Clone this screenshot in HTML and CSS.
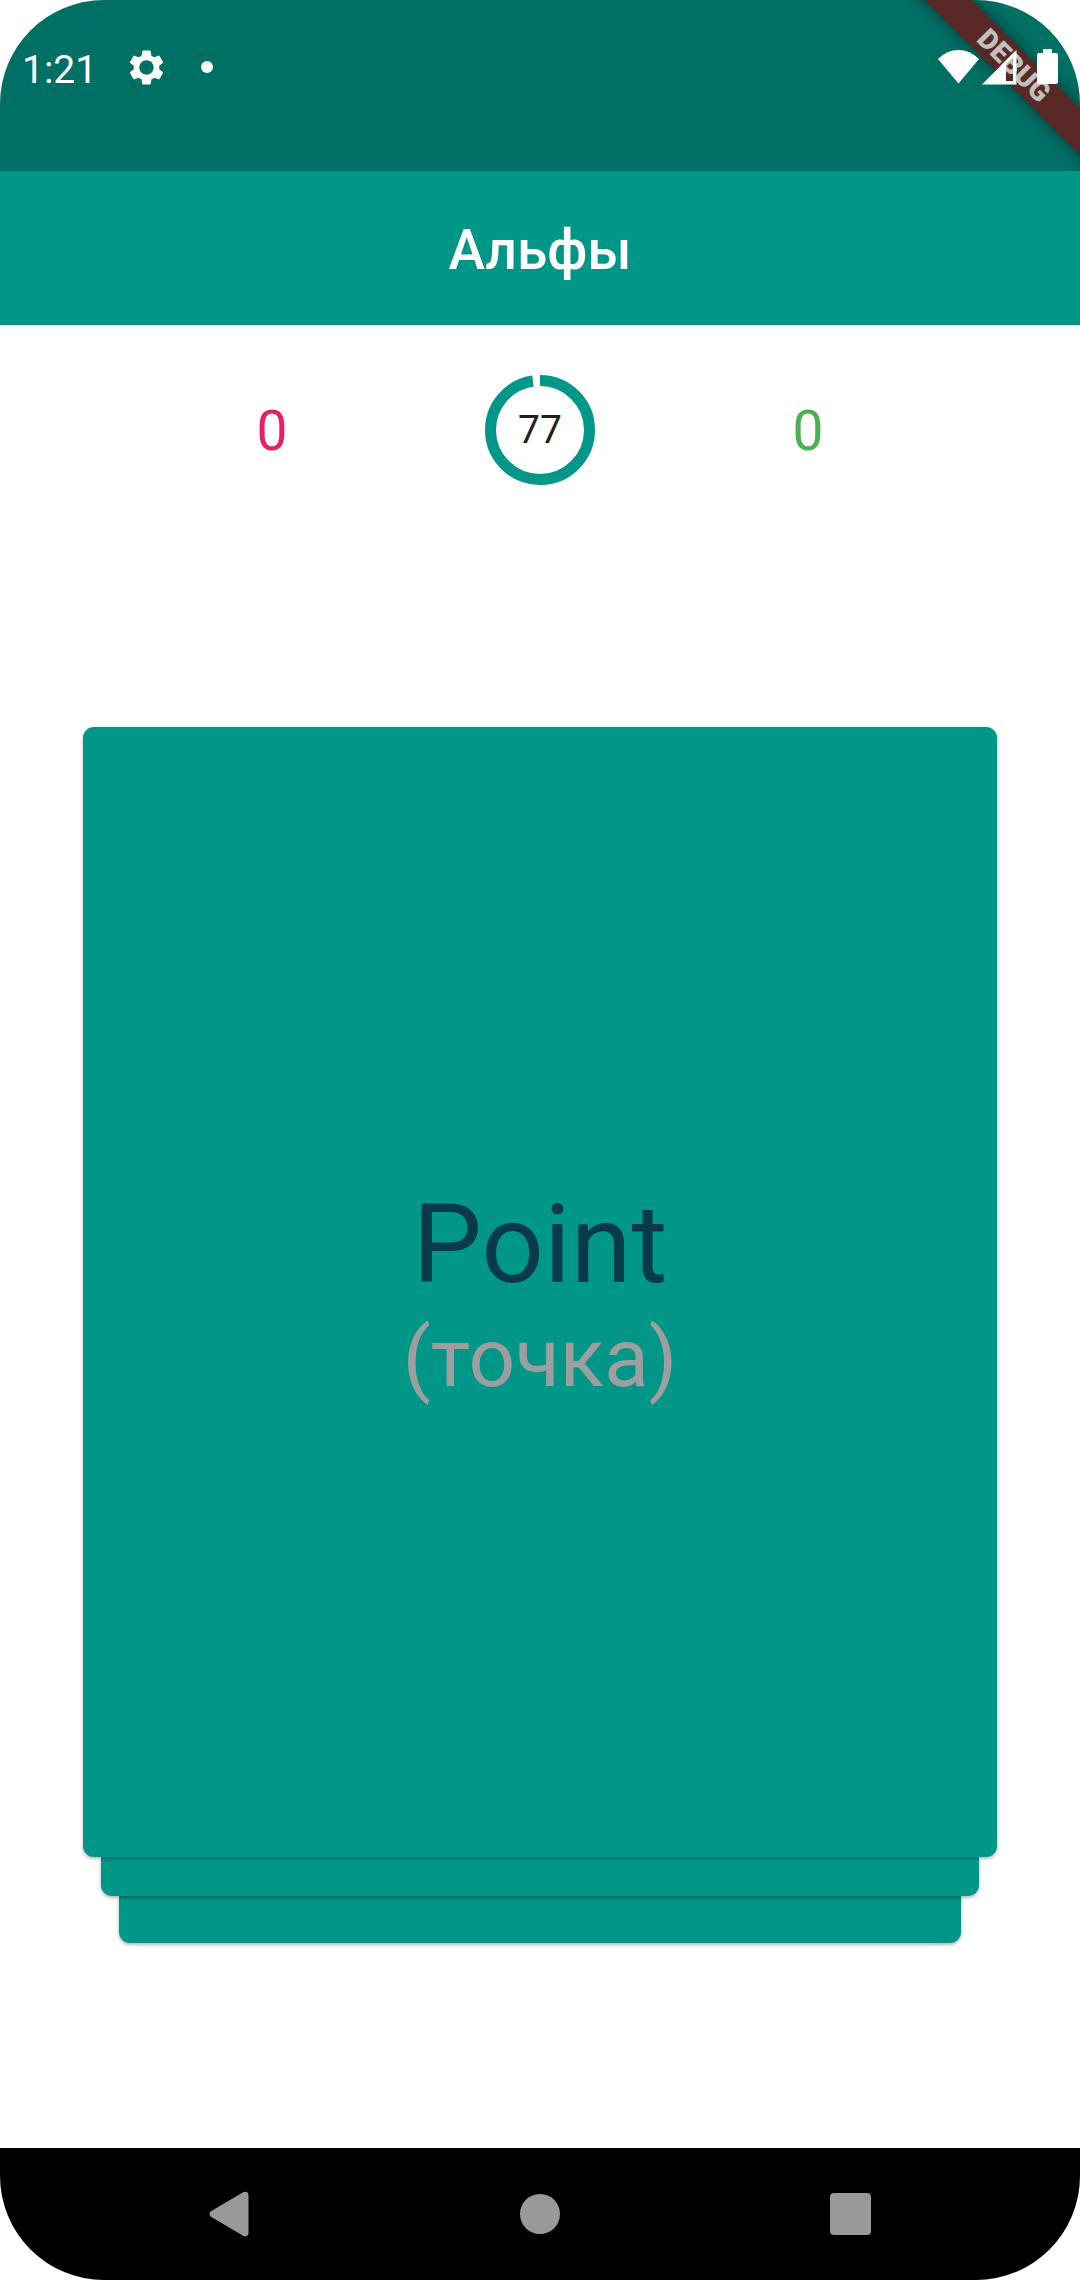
FILE: index.html
```html
<!DOCTYPE html>
<html lang="ru">
<head>
  <meta charset="utf-8">
  <meta name="viewport" content="width=device-width, initial-scale=1">
  <title>Альфы</title>
  <link rel="stylesheet" href="styles.css">
</head>
<body>
  <div class="screen">
    <div class="status-bar">
      <div class="ribbon">DEBUG</div>
      <div class="status-row">
        <span class="clock">1:21</span>
        <svg class="gear" viewBox="0 0 24 24" aria-hidden="true">
          <path d="M19.43 12.98c.04-.32.07-.64.07-.98s-.03-.66-.07-.98l2.11-1.65c.19-.15.24-.42.12-.64l-2-3.46c-.12-.22-.39-.3-.61-.22l-2.49 1c-.52-.4-1.08-.73-1.69-.98l-.38-2.65C14.46 2.18 14.25 2 14 2h-4c-.25 0-.46.18-.49.42l-.38 2.65c-.61.25-1.17.59-1.69.98l-2.49-1c-.23-.09-.49 0-.61.22l-2 3.46c-.13.22-.07.49.12.64l2.11 1.65c-.04.32-.07.65-.07.98s.03.66.07.98l-2.11 1.65c-.19.15-.24.42-.12.64l2 3.46c.12.22.39.3.61.22l2.49-1c.52.4 1.08.73 1.69.98l.38 2.65c.03.24.24.42.49.42h4c.25 0 .46-.18.49-.42l.38-2.65c.61-.25 1.17-.59 1.69-.98l2.49 1c.23.09.49 0 .61-.22l2-3.46c.12-.22.07-.49-.12-.64l-2.11-1.65zM12 16.200c-2.320 0-4.200-1.880-4.200-4.200s1.880-4.200 4.200-4.200 4.200 1.880 4.200 4.200-1.880 4.200-4.200 4.200z"/>
        </svg>
        <span class="dot"></span>
        <span class="signals">
          <svg width="41" height="36" viewBox="0 0 41 36" aria-hidden="true">
            <path d="M20.5 34.5 0 10Q9 1 20.5 1T41 10Z"/>
          </svg>
          <svg width="35" height="36" viewBox="0 0 35 36" aria-hidden="true">
            <path fill-rule="evenodd" d="M0 35.5 34.500 1V35.500ZM24 15.500V32H31V8.500Z"/>
          </svg>
          <svg class="battery" width="21" height="36" viewBox="0 0 21 36" aria-hidden="true">
            <path d="M6 0h9v4h4a2 2 0 0 1 2 2v27a2 2 0 0 1-2 2H2a2 2 0 0 1-2-2V6a2 2 0 0 1 2-2h4z"/>
          </svg>
        </span>
      </div>
    </div>

    <header class="app-bar">
      <h1 class="title">Альфы</h1>
    </header>

    <main class="game">
      <div class="scores">
        <span class="score wrong">0</span>
        <div class="timer">
          <svg class="ring" viewBox="0 0 110 110" aria-hidden="true">
            <circle cx="55" cy="55" r="49.5" pathLength="1000"/>
          </svg>
          <span class="seconds">77</span>
        </div>
        <span class="score right">0</span>
      </div>

      <div class="deck">
        <section class="card front">
          <p class="word">Point</p>
          <p class="translation">(точка)</p>
        </section>
        <div class="card second"></div>
        <div class="card third"></div>
      </div>
    </main>

    <nav class="nav-bar">
      <button class="nav-button" type="button" aria-label="Back">
        <svg width="40" height="46" viewBox="0 0 40 46" aria-hidden="true">
          <path d="M1.500 20.500 34.500 1Q39 -.5 39.500 4V42Q39 46 34.500 45L1.500 25.500Q-.5 23 1.500 20.500Z"/>
        </svg>
      </button>
      <button class="nav-button" type="button" aria-label="Home">
        <svg width="40" height="44" viewBox="0 0 40 44" aria-hidden="true"><circle cx="20" cy="22" r="20"/></svg>
      </button>
      <button class="nav-button" type="button" aria-label="Recent apps">
        <svg width="41" height="42" viewBox="0 0 41 42" aria-hidden="true"><rect width="41" height="42" rx="4"/></svg>
      </button>
    </nav>
  </div>
</body>
</html>
```
FILE: styles.css
```css
:root {
  --teal: #009688;
  --teal-dark: #007065;
  --corner: 104px;
}

* {
  box-sizing: border-box;
}

body {
  margin: 0;
  background: #fff;
  font-family: Roboto, "Noto Sans", sans-serif;
}

.screen {
  display: flex;
  flex-direction: column;
  min-height: 100vh;
}

/* System status bar */
.status-bar {
  position: relative;
  overflow: hidden;
  padding: 45px 22px 82px;
  background: var(--teal-dark);
  border-radius: var(--corner) var(--corner) 0 0;
}

.status-row {
  position: relative;
  display: flex;
  align-items: center;
  height: 44px;
  color: #fff;
  fill: #fff;
}

.clock {
  font-size: 39px;
  line-height: 44px;
  padding-top: 6px;
}

.gear {
  width: 41px;
  height: 41px;
  margin-left: 29px;
}

.dot {
  width: 12px;
  height: 12px;
  margin-left: 34px;
  border-radius: 50%;
  background: #fff;
}

.signals {
  display: flex;
  gap: 3px;
  margin-left: auto;
}

.battery {
  margin-left: 17px;
}

/* Diagonal ribbon across the top right corner */
.ribbon {
  position: absolute;
  top: 49px;
  right: -94px;
  width: 320px;
  height: 33px;
  background: #5a2827;
  box-shadow: 0 0 17px rgba(0, 0, 0, 0.5);
  color: #c0c0c0;
  font-size: 28px;
  font-weight: 900;
  line-height: 33px;
  text-align: center;
  transform: rotate(45deg);
}

/* App bar */
.app-bar {
  display: flex;
  align-items: center;
  justify-content: center;
  height: 154px;
  padding-top: 4px;
  background: var(--teal);
  color: #fff;
}

.title {
  margin: 0;
  font-size: 55px;
  font-weight: 500;
  line-height: 64px;
}

/* Game area */
.game {
  flex: 1;
  display: flex;
  flex-direction: column;
  padding: 50px 83px 205px;
}

.scores {
  display: grid;
  grid-template-columns: repeat(3, 1fr);
  place-items: center;
  padding: 0 55px;
}

.score {
  padding-top: 2px;
  font-size: 55px;
  line-height: 64px;
}

.wrong {
  color: #e91e63;
}

.right {
  color: #4caf50;
}

.timer {
  display: grid;
  place-items: center;
  width: 110px;
  height: 110px;
}

.ring,
.seconds {
  grid-area: 1 / 1;
}

.ring {
  width: 110px;
  height: 110px;
  fill: none;
  stroke: var(--teal);
  stroke-width: 11;
  stroke-dasharray: 977 23;
  transform: rotate(-90deg);
}

.seconds {
  color: #212121;
  font-size: 39px;
  line-height: 44px;
}

.deck {
  flex: 1;
  display: flex;
  flex-direction: column;
  margin-top: 242px;
}

.card {
  position: relative;
  background: var(--teal);
  border-radius: 0 0 11px 11px;
  box-shadow: 0 2px 3px rgba(0, 0, 0, 0.2), 0 1px 5px rgba(0, 0, 0, 0.12);
}

.front {
  z-index: 2;
  flex: 1;
  display: flex;
  flex-direction: column;
  align-items: center;
  justify-content: center;
  min-height: 320px;
  padding-top: 4px;
  border-radius: 11px;
}

.second {
  z-index: 1;
  height: 39px;
  margin: 0 18px;
}

.third {
  height: 47px;
  margin: 0 36px;
}

.word,
.translation {
  margin: 0;
}

.word {
  color: #073b4c;
  font-size: 110px;
  line-height: 128px;
}

.translation {
  color: #9e9e9e;
  font-size: 82px;
  line-height: 98px;
}

/* System navigation */
.nav-bar {
  display: grid;
  grid-template-columns: repeat(3, 1fr);
  height: 132px;
  padding: 0 74px;
  background: #000;
  border-radius: 0 0 var(--corner) var(--corner);
}

.nav-button {
  display: flex;
  align-items: center;
  justify-content: center;
  padding: 0;
  border: 0;
  background: none;
  fill: #999;
}
```
